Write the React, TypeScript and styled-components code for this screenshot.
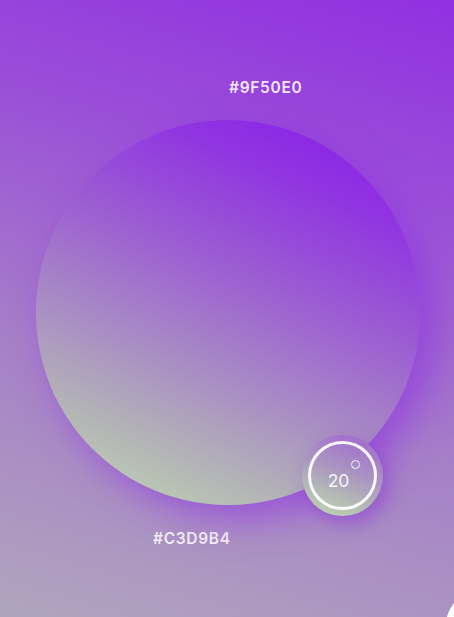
import React from "react";
import styled, { createGlobalStyle } from "styled-components";

const Global = createGlobalStyle`
  html, body { margin: 0; padding: 0; }
  body { width: 454px; height: 617px; overflow: hidden; font-family: "Inter", "Noto Sans", sans-serif; }
`;

const Screen = styled.div`
  position: relative;
  width: 454px;
  height: 617px;
  overflow: hidden;
  display: flex;
  flex-direction: column;
  background: linear-gradient(196deg, #9130e1 0%, #9a4ed8 28%, #a67fc8 62%, #b0a5bd 100%);
`;

const HexLabel = styled.div<{ $indent: number; $top: number }>`
  margin-top: ${(p) => p.$top}px;
  padding-left: ${(p) => p.$indent}px;
  height: 20px;
  line-height: 20px;
  font-size: 15.5px;
  font-weight: 600;
  letter-spacing: 0.7px;
  color: rgba(255, 255, 255, 0.9);
`;

const Stage = styled.div`
  position: relative;
  margin-top: 22px;
  margin-left: 36px;
  width: 384px;
  height: 385px;
`;

const Orb = styled.div`
  width: 384px;
  height: 385px;
  border-radius: 50%;
  background: linear-gradient(
    204deg,
    #8519eb 0%,
    #9137e0 22%,
    #9e64d0 45%,
    #a98fc3 64%,
    #b3b4b6 80%,
    #c3deb0 100%
  );
  box-shadow: 14px 14px 36px rgba(142, 40, 232, 0.55);
`;

const Knob = styled.div`
  position: absolute;
  left: 266px;
  top: 315px;
  width: 81px;
  height: 81px;
  border-radius: 50%;
  display: flex;
  align-items: center;
  justify-content: center;
  background: linear-gradient(200deg, #9f63d2 0%, #aa94c2 45%, #b3b8b5 70%, #bedaaf 100%);
  box-shadow: 6px 8px 18px rgba(140, 50, 220, 0.5);
`;

const Ring = styled.div`
  width: 63px;
  height: 63px;
  border-radius: 50%;
  border: 3.5px solid rgba(255, 255, 255, 0.92);
  display: flex;
  align-items: center;
  justify-content: center;
  position: relative;
`;

const Temp = styled.span`
  font-size: 17.5px;
  font-weight: 400;
  color: rgba(255, 255, 255, 0.92);
  margin-top: 10px;
  margin-left: -8px;
`;

const Degree = styled.span`
  position: absolute;
  left: 40px;
  top: 16px;
  width: 7px;
  height: 7px;
  border-radius: 50%;
  border: 1.5px solid rgba(255, 255, 255, 0.92);
`;

const CornerBlob = styled.div`
  position: absolute;
  right: -81px;
  bottom: -58px;
  width: 90px;
  height: 90px;
  border-radius: 50%;
  background: #ffffff;
`;

export default function App() {
  return (
    <>
      <Global />
      <Screen>
        <HexLabel $top={78} $indent={229}>#9F50E0</HexLabel>
        <Stage>
          <Orb />
          <Knob>
            <Ring>
              <Temp>20</Temp>
              <Degree />
            </Ring>
          </Knob>
        </Stage>
        <HexLabel $top={24} $indent={153}>#C3D9B4</HexLabel>
        <CornerBlob />
      </Screen>
    </>
  );
}
